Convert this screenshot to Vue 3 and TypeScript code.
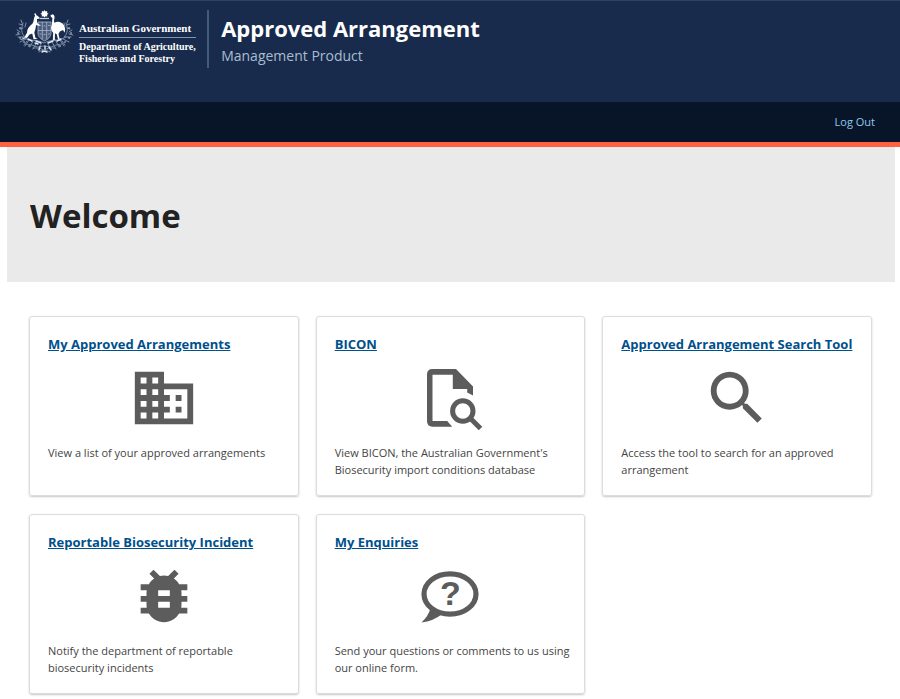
<script setup lang="ts">
type IconName = 'building' | 'document' | 'search' | 'bug' | 'question'

interface Tile {
  title: string
  icon: IconName
  text: string
}

const tiles: Tile[] = [
  { title: 'My Approved Arrangements', icon: 'building', text: 'View a list of your approved arrangements' },
  { title: 'BICON', icon: 'document', text: "View BICON, the Australian Government's Biosecurity import conditions database" },
  { title: 'Approved Arrangement Search Tool', icon: 'search', text: 'Access the tool to search for an approved arrangement' },
  { title: 'Reportable Biosecurity Incident', icon: 'bug', text: 'Notify the department of reportable biosecurity incidents' },
  { title: 'My Enquiries', icon: 'question', text: 'Send your questions or comments to us using our online form.' },
]

// Single-path icons drawn on a 24-unit grid
const paths: Partial<Record<IconName, string>> = {
  building:
    'M12 7V3H2v18h20V7H12zM6 19H4v-2h2v2zm0-4H4v-2h2v2zm0-4H4V9h2v2zm0-4H4V5h2v2zm4 12H8v-2h2v2zm0-4H8v-2h2v2zm0-4H8V9h2v2zm0-4H8V5h2v2zm10 12h-8v-2h2v-2h-2v-2h2v-2h-2V9h8v10zm-2-8h-2v2h2v-2zm0 4h-2v2h2v-2z',
  search:
    'M15.5 14h-.79l-.28-.27C15.41 12.59 16 11.11 16 9.5 16 5.91 13.09 3 9.5 3S3 5.91 3 9.5 5.91 16 9.5 16c1.61 0 3.09-.59 4.23-1.57l.27.28v.79l5 4.99L20.49 19l-4.99-5zm-6 0C7.01 14 5 11.99 5 9.5S7.01 5 9.5 5 14 7.01 14 9.5 11.99 14 9.5 14z',
  bug:
    'M20 8h-2.81c-.45-.78-1.07-1.45-1.82-1.96L17 4.41 15.59 3l-2.17 2.17C12.96 5.06 12.49 5 12 5c-.49 0-.96.06-1.41.17L8.41 3 7 4.41l1.62 1.63C7.88 6.55 7.26 7.22 6.81 8H4v2h2.09c-.05.33-.09.66-.09 1v1H4v2h2v1c0 .34.04.67.09 1H4v2h2.81c1.04 1.79 2.97 3 5.19 3s4.15-1.21 5.19-3H20v-2h-2.09c.05-.33.09-.66.09-1v-1h2v-2h-2v-1c0-.34-.04-.67-.09-1H20V8zm-6 8h-4v-2h4v2zm0-4h-4v-2h4v2z',
}
</script>

<template>
  <header>
    <div class="masthead">
      <svg class="crest" viewBox="0 0 60 46" aria-hidden="true">
        <!-- star -->
        <path d="M29.500 0l1 1.500 1.700-.4-.1 1.800 1.500.9-1.500 1 .2 1.700-1.800-.3-1 1.400-1-1.400-1.800.3.200-1.700-1.500-1 1.500-.9-.1-1.800 1.700.4z" fill="#fff" />
        <path d="M24.500 8.500h9.500" stroke="#c3cddb" stroke-width="1.300" />
        <!-- shield -->
        <path d="M23 12h13v11c0 4-3 6-6.500 8-3.500-2-6.500-4-6.500-8z" fill="#4a5c7d" stroke="#94a3ba" />
        <path d="M27.300 12v17M31.700 12v17M23 20.500h13M24 15.500h2M28.500 16h2M33 15.500h2M24.500 24h2M28.500 24.500h2M33 24h2" stroke="#a9b6c9" stroke-width=".8" />
        <!-- kangaroo -->
        <path d="M20.600 3.200l.9 2 1.200.8 1.800 1.600-.5 1.100-2 .2.200 4.200 2.500 1.700-.3 1.100-3.300-.8-.6 3.700-1.200 3.700 1.100 5.200 2.400 1.300-4.200.2-1.400-5.600-3 1.200-1.600 2.400-3.800 2-4.300.5 4.600-2 3-5.300c.2-4.700 3.400-6.800 5.600-9.200 1.400-2 .9-5.800 2.400-7.400l-1-2z" fill="#fff" />
        <!-- emu -->
        <path d="M35.200 5.700l2-1.500 1.800.8.600 2-.7 4.300.6 1.400c3-1.800 7.500-.9 9.600 2.700 1.500 2.600 1.200 5.300.3 7.300l-1.300-2.800-3.300 1.700-1.300 2.400 1.200 5 2.200 1.500-3.600.1-1.600-6.400-1.700-.9-.2 5.700 1.300 1.600-3.300-.1.400-7.800c-2.400-2.200-2.700-5.300-1.300-8.200l.5-6.400-1-.9z" fill="#fff" />
        <!-- wattle -->
        <g fill="none" stroke="#7d8fab" stroke-width="1" stroke-linecap="round">
          <path d="M7 13l-1-3M8 15l-4-1M8 18l-3 1M10 17l1-4M5 22l-3-2M5 24l-4 1M9 27l-6 0M11 29l-6 3M12 31l-3 4M10 27c-4-3-4-9-2-14" />
          <path d="M52 13l1-3M51 15l4-1M52 18l3 1M50 17l-1-4M54 22l3-2M54 24l4 1M50 27l6 0M48 29l6 3M47 31l3 4M49 27c4-3 4-9 2-14" />
          <path d="M7 27c8 5 15 2 22 6 7-4 14-1 22-6M14 30l-4 6M18 31l-3 6M22 32l-4 7M26 34l-3 6M33 34l3 6M37 32l4 7M41 31l3 6M45 30l4 6" />
          <path d="M11 34l6 1 5 2 7-1 7 1 5-2 6-1M18 38l6 0 5 2 5-2 6 0M24 42l3-2 2 2 2-2 4 2" stroke-dasharray="2 1" />
        </g>
        <g fill="none" stroke="#e1e7ef" stroke-linecap="round" stroke-width="1.400">
          <path d="M5 18h.1M3 23h.1M5 28h.1M9 32h.1M14 36h.1M54 18h.1M56 23h.1M54 28h.1M50 32h.1M45 36h.1" />
          <path d="M13 29l4 2M20 33l3 1M25 37l-1 3M30 36v3M34 37l2 3M42 31l4-2M27 42l2-1 3 1M21 31l5 2M33 33l5-2" />
        </g>
      </svg>
      <div class="agency">
        <div class="government">Australian Government</div>
        <div class="department">Department of Agriculture,<br />Fisheries and Forestry</div>
      </div>
      <div class="product">
        <div class="product-name">Approved Arrangement</div>
        <div class="product-sub">Management Product</div>
      </div>
    </div>
    <nav><a href="#">Log Out</a></nav>
  </header>
  <main>
    <div class="banner"><h1>Welcome</h1></div>
    <div class="tiles">
      <section v-for="tile in tiles" :key="tile.title" class="tile">
        <h2><a href="#">{{ tile.title }}</a></h2>
        <svg v-if="paths[tile.icon]" class="icon" viewBox="0 0 24 24" fill="currentColor" aria-hidden="true">
          <path :d="paths[tile.icon]" />
        </svg>
        <svg v-else-if="tile.icon === 'document'" class="icon" viewBox="0 0 70 70" aria-hidden="true">
          <path fill="currentColor" d="M17.500 6H41L58 23.500V32.500L52.200 29.500V26H37.800V11.700H17.500V58H32.200L37.200 63.700H17.500Q12 63.700 12 58V11.500Q12 6 17.500 6Z" />
          <circle cx="47.800" cy="48" r="10.200" fill="none" stroke="currentColor" stroke-width="5" />
          <path d="M55 55L65.500 65.500" stroke="currentColor" stroke-width="5" />
        </svg>
        <svg v-else class="icon" viewBox="0 0 70 70" aria-hidden="true">
          <ellipse cx="35" cy="33" rx="26" ry="20.200" fill="none" stroke="currentColor" stroke-width="5.200" />
          <path fill="currentColor" d="M15.500 47Q13.500 55 6.500 61.500Q18.500 60 26.500 53.500Z" />
          <text class="mark" x="35.500" y="44" text-anchor="middle" fill="currentColor">?</text>
        </svg>
        <p>{{ tile.text }}</p>
      </section>
    </div>
  </main>
</template>

<style>
body {
  margin: 0;
  background: #fff;
}
</style>

<style scoped>
header,
main {
  font-family: "Open Sans", "Noto Sans", sans-serif;
}

header {
  border-bottom: 5px solid #ff6243;
}

.masthead {
  box-sizing: border-box;
  height: 102px;
  padding: 9px 15px;
  border-top: 1px solid #2a4266;
  background: #182b4d;
  display: flex;
  align-items: flex-start;
}

.crest {
  width: 60px;
  height: 46px;
  flex: none;
}

.agency {
  margin: 11px 11px 0 4px;
  color: #fff;
  font-family: "Liberation Serif", serif;
  font-weight: 700;
  white-space: nowrap;
}

.government {
  padding: 0 5px 2px 0;
  border-bottom: 1px solid #8393ad;
  font-size: 11px;
  line-height: 14px;
}

.department {
  padding-top: 3px;
  font-size: 10px;
  line-height: 12px;
}

.product {
  box-sizing: border-box;
  height: 58px;
  padding-left: 12px;
  border-left: 2px solid #405b7b;
  white-space: nowrap;
}

.product-name {
  color: #fff;
  font-size: 22px;
  font-weight: 700;
  line-height: 36px;
}

.product-sub {
  color: #a9bdd0;
  font-size: 14px;
  line-height: 20px;
}

nav {
  box-sizing: border-box;
  height: 40px;
  padding: 12px 25px;
  background: #081528;
  display: flex;
  justify-content: flex-end;
}

nav a {
  color: #8fc9ee;
  font-size: 11px;
  line-height: 16px;
  text-decoration: none;
}

main {
  padding: 0 5px 0 7px;
}

.banner {
  padding: 45px 23px 42px;
  background: #eaeaea;
}

h1 {
  margin: 0;
  color: #222;
  font-size: 33px;
  font-weight: 700;
  line-height: 48px;
}

.tiles {
  padding: 34px 23px 4px 22px;
  display: grid;
  grid-template-columns: repeat(3, 1fr);
  gap: 18px 17px;
}

.tile {
  box-sizing: border-box;
  min-height: 180px;
  padding: 17px 12px 16px 18px;
  border: 1px solid #dcdcdc;
  border-radius: 3px;
  box-shadow: 0 1px 2px rgba(0, 0, 0, 0.22);
  display: flex;
  flex-direction: column;
}

h2 {
  margin: 0;
  font-size: 13px;
  font-weight: 700;
  line-height: 20px;
  white-space: nowrap;
}

h2 a {
  color: #00508c;
}

.icon {
  width: 70px;
  height: 70px;
  margin: 9px 6px 11px 0;
  align-self: center;
  color: #5c5c5c;
}

.mark {
  font: 700 34px "Liberation Sans", sans-serif;
}

p {
  margin: 0;
  color: #444;
  font-size: 11px;
  line-height: 17px;
}
</style>
